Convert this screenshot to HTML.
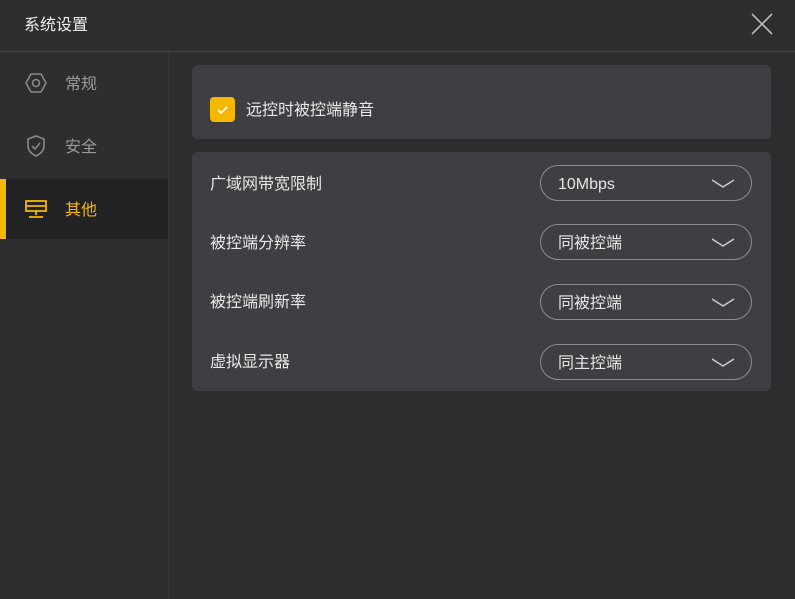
<!DOCTYPE html>
<html><head><meta charset="utf-8"><style>
*{margin:0;padding:0;box-sizing:border-box}
body{width:795px;height:599px;background:#2e2e30;font-family:"Liberation Sans","Noto Sans CJK SC",sans-serif;color:#e6e6e6;position:relative;overflow:hidden;line-height:18px}
.hdr{position:absolute;left:0;top:0;width:795px;height:52px;border-bottom:1px solid #454548}
.title{position:absolute;left:24px;top:17px;font-size:16px;color:#eee}
.side{position:absolute;left:0;top:53px;width:169px;height:546px;border-right:1px solid #38383b}
.item{position:absolute;left:0;width:168px;height:60px;font-size:16px;color:#9a9a9e}
.item span{position:absolute;left:65px;top:23px}
.item svg{position:absolute;left:25px;top:19px}
.sel{background:#222225;color:#f5b800}
.sel:before{content:"";position:absolute;left:0;top:0;width:6px;height:60px;background:#f5b800}
.card{position:absolute;left:192px;width:579px;background:#3f3e43;border-radius:6px}
.lbl{position:absolute;left:18px;font-size:16px;color:#e8e8e8}
.dd{position:absolute;left:348px;width:212px;height:36px;border:1.5px solid #8c8c90;border-radius:18px;font-size:16px}
.dd span{position:absolute;left:17px;top:10px}
.dd svg{position:absolute;right:16px;top:12px}
</style></head><body>
<div class="hdr"><div class="title">系统设置</div>
<svg style="position:absolute;left:751px;top:13px" width="22" height="22"><path d="M1 1L21 21M21 1L1 21" stroke="#bbb" stroke-width="1.6"/></svg></div>
<div class="side">
<div class="item" style="top:0"><svg width="22" height="22"><path d="M6 2H16L21 11L16 20H6L1 11Z" fill="none" stroke="#8a8a8e" stroke-width="1.6"/><circle cx="11" cy="11" r="3.5" fill="none" stroke="#8a8a8e" stroke-width="1.6"/></svg><span>常规</span></div>
<div class="item" style="top:63px"><svg width="22" height="22"><path d="M11 1L19 4V11C19 16 15 19 11 21C7 19 3 16 3 11V4Z" fill="none" stroke="#8a8a8e" stroke-width="1.6"/><path d="M7 11L10 14L15 8" fill="none" stroke="#8a8a8e" stroke-width="1.6"/></svg><span>安全</span></div>
<div class="item sel" style="top:126px"><svg width="22" height="22"><rect x="1" y="3" width="20" height="10" fill="none" stroke="#f5b800" stroke-width="1.8"/><path d="M1 8H21M11 13V17M4 19H18" stroke="#f5b800" stroke-width="1.8"/></svg><span>其他</span></div>
</div>
<div class="card" style="top:65px;height:74px">
<div style="position:absolute;left:18px;top:32px;width:25px;height:25px;background:#f5b800;border-radius:4px"><svg width="25" height="25"><path d="M8 13L11 16L17 10" fill="none" stroke="#fff" stroke-width="1.6"/></svg></div>
<div class="lbl" style="left:54px;top:37px">远控时被控端静音</div>
</div>
<div class="card" style="top:152px;height:239px">
<div class="lbl" style="top:24px">广域网带宽限制</div>
<div class="lbl" style="top:83px">被控端分辨率</div>
<div class="lbl" style="top:142px">被控端刷新率</div>
<div class="lbl" style="top:202px">虚拟显示器</div>
<div class="dd" style="top:13px"><span>10Mbps</span><svg width="24" height="12"><path d="M1 2L12 9L23 2" fill="none" stroke="#ccc" stroke-width="1.4"/></svg></div>
<div class="dd" style="top:72px"><span>同被控端</span><svg width="24" height="12"><path d="M1 2L12 9L23 2" fill="none" stroke="#ccc" stroke-width="1.4"/></svg></div>
<div class="dd" style="top:132px"><span>同被控端</span><svg width="24" height="12"><path d="M1 2L12 9L23 2" fill="none" stroke="#ccc" stroke-width="1.4"/></svg></div>
<div class="dd" style="top:192px"><span>同主控端</span><svg width="24" height="12"><path d="M1 2L12 9L23 2" fill="none" stroke="#ccc" stroke-width="1.4"/></svg></div>
</div>
</body></html>
